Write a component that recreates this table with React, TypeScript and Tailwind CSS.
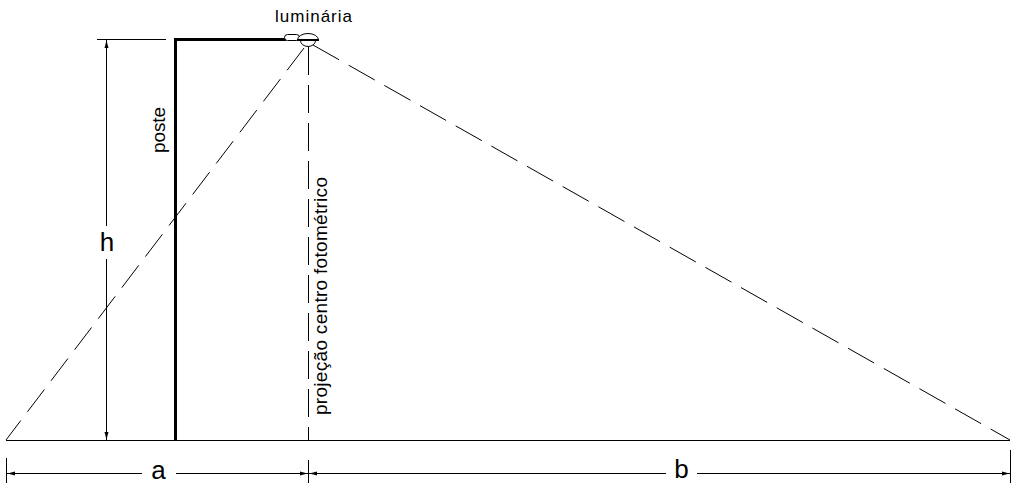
import React from "react";

export default function App() {
  const font = { fontFamily: '"Liberation Sans", Arial, sans-serif' };
  return (
    <div className="w-[1018px] h-[494px] bg-white overflow-hidden">
      <svg width="1018" height="494" viewBox="0 0 1018 494" className="block" style={font}>
        {/* ground line */}
        <line x1="6" y1="440.5" x2="1010" y2="440.5" stroke="#000" strokeWidth="1" shapeRendering="crispEdges" />

        {/* pole */}
        <line x1="175.5" y1="38" x2="175.5" y2="441" stroke="#000" strokeWidth="3" shapeRendering="crispEdges" />
        <line x1="174" y1="39.5" x2="286" y2="39.5" stroke="#000" strokeWidth="3" shapeRendering="crispEdges" />

        {/* luminaire */}
        <rect x="284.5" y="34.5" width="15" height="6" rx="3" fill="#fff" stroke="#000" strokeWidth="1" />
        <path d="M297.5 40 A10.5 6.5 0 0 1 318.5 40" fill="#fff" stroke="#000" strokeWidth="1" />
        <path d="M300.5 40.5 A7.5 6 0 0 0 315.5 40.5" fill="#fff" stroke="#000" strokeWidth="1" />
        <line x1="297" y1="40" x2="319" y2="40" stroke="#000" strokeWidth="2" />

        {/* photometric center projection */}
        <line x1="308.5" y1="47" x2="308.5" y2="440" stroke="#000" strokeWidth="1" strokeDasharray="28 10" shapeRendering="crispEdges" />

        {/* light cone dashed lines */}
        <line x1="304" y1="48" x2="6" y2="440" stroke="#000" strokeWidth="1" strokeDasharray="28 11" />
        <line x1="313" y1="45" x2="1010" y2="440" stroke="#000" strokeWidth="1" strokeDasharray="30 11" />

        {/* h dimension */}
        <line x1="97" y1="39.5" x2="166" y2="39.5" stroke="#000" strokeWidth="1" shapeRendering="crispEdges" />
        <line x1="106.5" y1="40" x2="106.5" y2="226" stroke="#000" strokeWidth="1" shapeRendering="crispEdges" />
        <line x1="106.5" y1="259" x2="106.5" y2="440" stroke="#000" strokeWidth="1" shapeRendering="crispEdges" />
        <polygon points="106.5,40.5 104.5,48 108.5,48" fill="#000" />
        <polygon points="106.5,439.5 104.5,432 108.5,432" fill="#000" />
        <text x="107" y="251" fontSize="26" textAnchor="middle" fill="#000">h</text>

        {/* bottom dimension */}
        <line x1="6.5" y1="458" x2="6.5" y2="483" stroke="#000" strokeWidth="1" shapeRendering="crispEdges" />
        <line x1="308.5" y1="460" x2="308.5" y2="483" stroke="#000" strokeWidth="1" shapeRendering="crispEdges" />
        <line x1="1010.5" y1="450" x2="1010.5" y2="483" stroke="#000" strokeWidth="1" shapeRendering="crispEdges" />

        <line x1="7" y1="473.5" x2="142" y2="473.5" stroke="#000" strokeWidth="1" shapeRendering="crispEdges" />
        <line x1="176" y1="473.5" x2="666" y2="473.5" stroke="#000" strokeWidth="1" shapeRendering="crispEdges" />
        <line x1="697" y1="473.5" x2="1010" y2="473.5" stroke="#000" strokeWidth="1" shapeRendering="crispEdges" />

        <polygon points="7.5,473.5 15,471.5 15,475.5" fill="#000" />
        <polygon points="307.5,473.5 300,471.5 300,475.5" fill="#000" />
        <polygon points="309.5,473.5 317,471.5 317,475.5" fill="#000" />
        <polygon points="1009.5,473.5 1002,471.5 1002,475.5" fill="#000" />

        <text x="158.5" y="479" fontSize="26" textAnchor="middle" fill="#000">a</text>
        <text x="681.5" y="478" fontSize="26" textAnchor="middle" fill="#000">b</text>

        {/* labels */}
        <text x="275" y="22" fontSize="17" textLength="77" lengthAdjust="spacing" fill="#000">luminária</text>
        <text transform="translate(165 153) rotate(-90)" fontSize="19" textLength="46" lengthAdjust="spacing" fill="#000">poste</text>
        <text transform="translate(326.5 415) rotate(-90)" fontSize="19" textLength="238" lengthAdjust="spacing" fill="#000">projeção centro fotométrico</text>
      </svg>
    </div>
  );
}
